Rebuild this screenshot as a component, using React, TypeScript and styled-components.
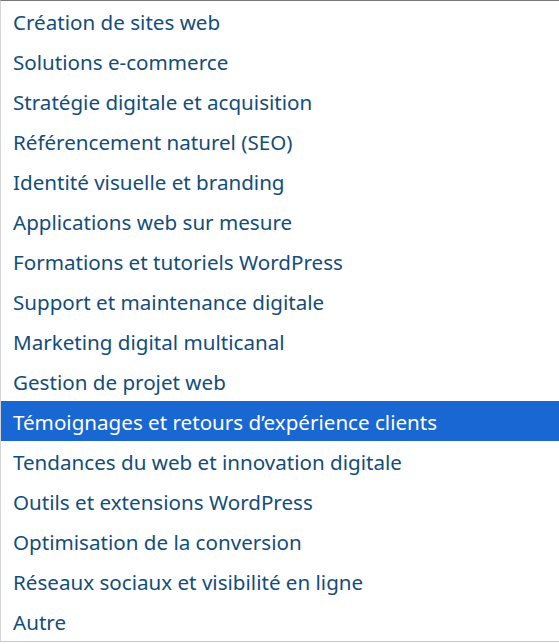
import styled, { createGlobalStyle } from "styled-components";

const Global = createGlobalStyle`
  html, body {
    margin: 0;
    padding: 0;
    background: #ffffff;
  }
`;

const List = styled.ul`
  list-style: none;
  margin: 0;
  padding: 0;
  width: 559px;
  box-sizing: border-box;
  border-top: 1px solid #767676;
  border-left: 1px solid #d4d4d4;
  border-bottom: 1px solid #c8c8c8;
  box-shadow: 0 2px 0 #8a8a8a;
  background: #ffffff;
  font-family: "Noto Sans", "Open Sans", sans-serif;
`;

const Option = styled.li<{ $active?: boolean }>`
  height: 40px;
  display: flex;
  align-items: center;
  padding: 1px 11px 0 12px;
  box-sizing: border-box;
  font-size: 20.6px;
  color: ${(p) => (p.$active ? "#ffffff" : "#134d7a")};
  background: ${(p) => (p.$active ? "#1967d2" : "transparent")};
  white-space: nowrap;
`;

const options = [
  "Création de sites web",
  "Solutions e-commerce",
  "Stratégie digitale et acquisition",
  "Référencement naturel (SEO)",
  "Identité visuelle et branding",
  "Applications web sur mesure",
  "Formations et tutoriels WordPress",
  "Support et maintenance digitale",
  "Marketing digital multicanal",
  "Gestion de projet web",
  "Témoignages et retours d’expérience clients",
  "Tendances du web et innovation digitale",
  "Outils et extensions WordPress",
  "Optimisation de la conversion",
  "Réseaux sociaux et visibilité en ligne",
  "Autre",
];

const App = () => {
  return (
    <>
      <Global />
      <List>
        {options.map((o, i) => (
          <Option key={o} $active={i === 10}>
            {o}
          </Option>
        ))}
      </List>
    </>
  );
};

export default App;
